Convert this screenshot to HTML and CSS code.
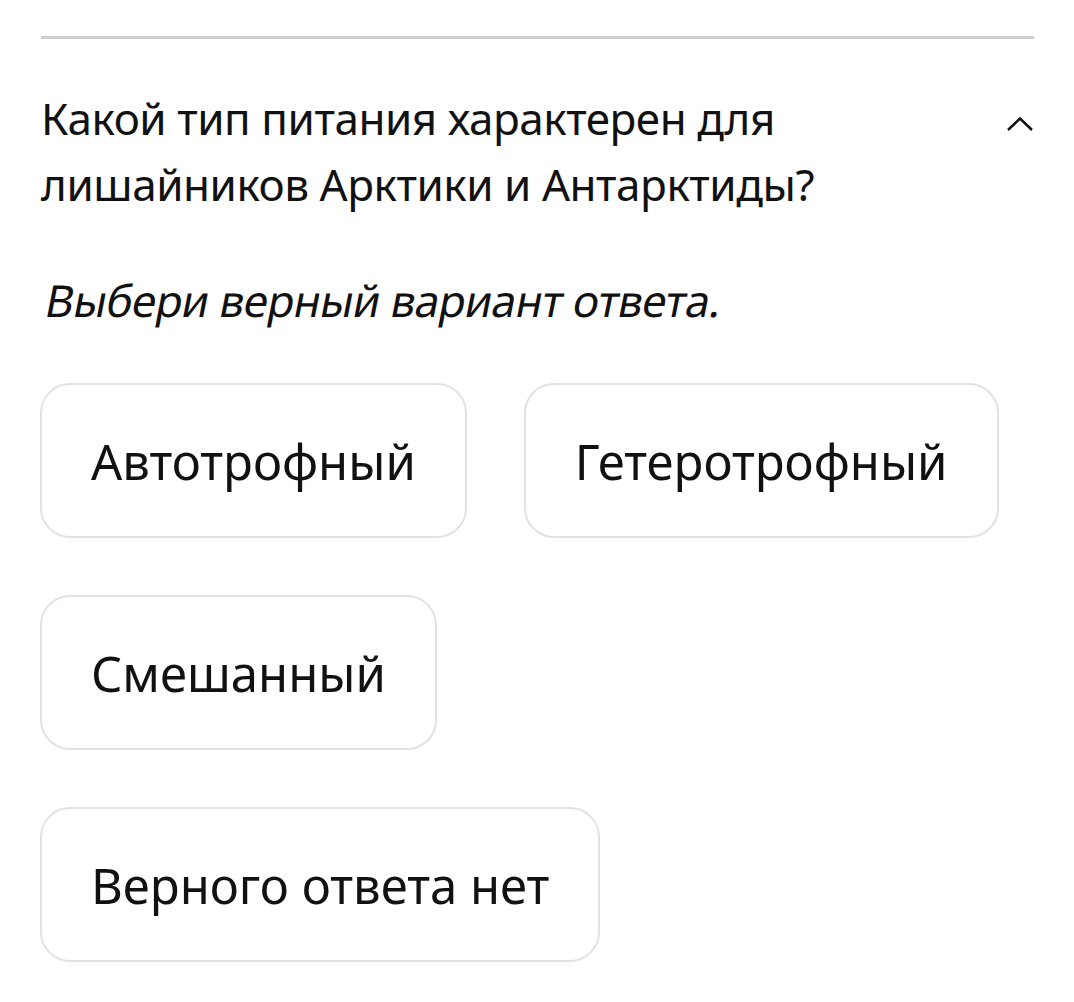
FILE: index.html
```html
<!DOCTYPE html>
<html lang="ru">
  <head>
    <meta charset="UTF-8" />
    <meta name="viewport" content="width=device-width, initial-scale=1.0" />
    <title>Вопрос</title>
    <link rel="stylesheet" href="styles.css">
  </head>
  <body>
    <div class="quiz">
      <hr class="divider" />

      <!-- Question header with collapse toggle -->
      <div class="question">
        <h2 class="question-text">Какой тип питания характерен для лишайников Арктики и Антарктиды?</h2>
        <button class="toggle" aria-label="Свернуть">
          <svg width="28" height="16" viewBox="0 0 28 16">
            <polyline points="2,14 14,2.5 26,14" fill="none" stroke="#111" stroke-width="2.5" />
          </svg>
        </button>
      </div>

      <p class="hint"><span class="slant">Выбери верный вариант ответа.</span></p>

      <div class="answers">
        <button class="answer">Автотрофный</button>
        <button class="answer">Гетеротрофный</button>
        <button class="answer">Смешанный</button>
        <button class="answer">Верного ответа нет</button>
      </div>
    </div>
  </body>
</html>
```

FILE: styles.css
```css
body {
  margin: 0;
  background: #fff;
  color: #111;
  font-family: "Noto Sans", "Open Sans", sans-serif;
}
.quiz {
  padding: 36px 40px 0 40px;
}
.divider {
  margin: 0 0 0 1px;
  border: none;
  border-top: 3px solid #cfcfcf;
}
.question {
  display: flex;
  justify-content: space-between;
  align-items: flex-start;
  margin-top: 46px;
}
.question-text {
  margin: 0 0 0 1px;
  max-width: 880px;
  font-size: 44px;
  font-weight: 400;
  line-height: 66px;
  letter-spacing: -0.45px;
}
.toggle {
  margin-top: 31px;
  padding: 0;
  border: none;
  background: none;
  cursor: pointer;
}
.hint {
  margin: 50px 0 0;
  font-size: 44px;
  line-height: 66px;
  letter-spacing: -0.55px;
}
.slant {
  display: inline-block;
  transform: skewX(-11deg);
  transform-origin: left bottom;
}
.answers {
  display: flex;
  flex-wrap: wrap;
  gap: 57px;
  margin-top: 50px;
  max-width: 985px;
}
.answer {
  flex: none;
  height: 155px;
  padding: 0 49px;
  border: 2.5px solid #e2e2e2;
  border-radius: 30px;
  background: #fff;
  color: #111;
  font-family: inherit;
  font-size: 49px;
  cursor: pointer;
}
```
